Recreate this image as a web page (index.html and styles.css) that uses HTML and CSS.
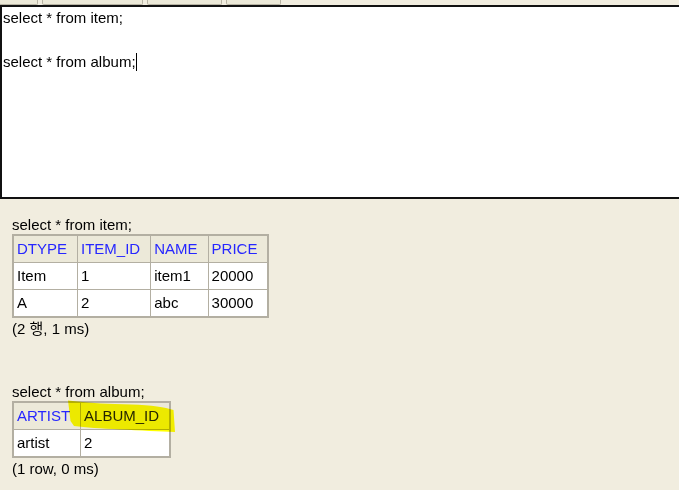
FILE: index.html
```html
<!DOCTYPE html>
<html>
<head>
<meta charset="utf-8">
<link rel="stylesheet" href="styles.css">
</head>
<body>
<div class="page">
  <div class="tabs">
    <div class="tab t1"></div>
    <div class="tab t2"></div>
    <div class="tab t3"></div>
    <div class="tab t4"></div>
  </div>
  <div class="editor"><div class="line">select * from item;</div><div class="line">&nbsp;</div><div class="line">select * from album;<span class="caret"></span></div></div>
  <div class="results">
    <div class="query">select * from item;</div>
    <table class="grid">
      <tr><th>DTYPE</th><th>ITEM_ID</th><th>NAME</th><th>PRICE</th></tr>
      <tr><td>Item</td><td>1</td><td>item1</td><td>20000</td></tr>
      <tr><td>A</td><td>2</td><td>abc</td><td>30000</td></tr>
    </table>
    <div class="status">(2 행, 1 ms)</div>

    <div class="query second">select * from album;</div>
    <table class="grid">
      <tr><th>ARTIST</th><th>ALBUM_ID</th></tr>
      <tr><td>artist</td><td>2</td></tr>
    </table>
    <div class="status">(1 row, 0 ms)</div>
  </div>
  <svg class="marker" width="679" height="490" viewBox="0 0 679 490">
    <path d="M68,400.5 C80,401.5 95,403.5 115,404 C138,404.5 156,405.5 166,408 L173.5,410 L175,432 C160,431.5 140,430.5 120,429.5 C100,428.5 86,427.5 74,426 L70.5,421 Z" fill="#ffff00"/>
  </svg>
</div>
</body>
</html>
```
FILE: styles.css
```css
html, body {
  margin: 0;
  padding: 0;
}
body {
  background: #f1eddf;
  font-family: "Liberation Sans", Arial, "Noto Sans CJK KR", sans-serif;
  font-size: 15px;
  color: #000;
  overflow: hidden;
  width: 679px;
  height: 490px;
}
.page {
  position: relative;
  width: 679px;
  height: 490px;
}
.tabs {
  display: flex;
  gap: 4px;
  height: 5px;
}
.tab {
  height: 4px;
  background: #ece9d8;
  border: 1px solid #b7b3a3;
  border-top: none;
  border-radius: 0 0 2px 2px;
}
.t1 { width: 37px; margin-left: -1px; }
.t2 { width: 99px; }
.t3 { width: 73px; }
.t4 { width: 53px; }
.editor {
  background: #fff;
  border: 2px solid #111;
  border-right: none;
  height: 190px;
  padding: 0 0 0 1px;
  line-height: 22px;
  margin-right: -4px;
}
.line {
  white-space: pre;
}
.caret {
  display: inline-block;
  width: 1px;
  height: 18px;
  background: #000;
  vertical-align: -4px;
}
.results {
  padding: 17px 0 0 12px;
  line-height: 18px;
}
.second {
  margin-top: 45px;
}
.grid {
  border-collapse: collapse;
  border: 2px solid #b3afa2;
}
.grid th, .grid td {
  border: 1px solid #b3afa2;
  padding: 4px 10px 4px 3px;
  text-align: left;
  font-weight: normal;
  line-height: 18px;
  white-space: nowrap;
}
.grid th {
  background: #ece9d9;
  color: #2626ff;
}
.grid td {
  background: #fff;
}
.status {
  margin-top: 2px;
}
.marker {
  position: absolute;
  left: 0;
  top: 0;
  mix-blend-mode: multiply;
  pointer-events: none;
}
```
